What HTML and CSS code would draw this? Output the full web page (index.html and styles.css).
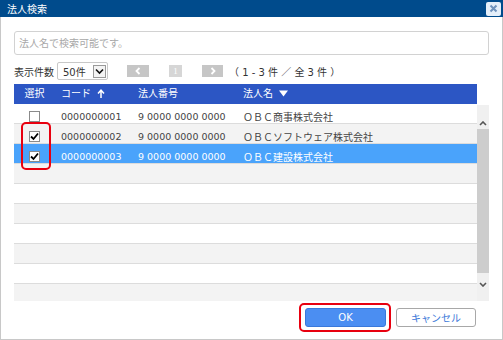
FILE: index.html
```html
<!DOCTYPE html>
<html>
<head>
<meta charset="utf-8">
<link rel="stylesheet" href="styles.css">
</head>
<body>
<div class="dlg">
	<div class="ttl"><span>法人検索</span><a class="cls"><svg width="9" height="9" viewBox="0 0 9 9"><path d="M1.5 1.5L7.5 7.5M7.5 1.5L1.5 7.5" stroke="#6f93bd" stroke-width="2"/></svg></a></div>
	<div class="cnt">
		<input class="srch" type="text" placeholder="法人名で検索可能です。">
		<div class="bar">
			<span>表示件数</span>
			<div class="sel"><span>50件</span><i class="dd"><svg width="9" height="7" viewBox="0 0 9 7"><path d="M1 1.5L4.5 5L8 1.5" fill="none" stroke="#111" stroke-width="1.6"/></svg></i></div>
			<a class="pg"><svg width="6" height="8" viewBox="0 0 6 8"><path d="M4.5 1L1.5 4L4.5 7" fill="none" stroke="#fff" stroke-width="1.8"/></svg></a>
			<a class="pg num">1</a>
			<a class="pg"><svg width="6" height="8" viewBox="0 0 6 8"><path d="M1.5 1L4.5 4L1.5 7" fill="none" stroke="#fff" stroke-width="1.8"/></svg></a>
			<span class="total">（ 1 - 3 件 ／ 全 3 件 ）</span>
		</div>
		<div class="hd">
			<div class="c1">選択</div>
			<div class="c2">コード <svg class="ar" width="8" height="9" viewBox="0 0 8 9"><path d="M4 9V1.5M1 4.5L4 1.2L7 4.5" fill="none" stroke="#fff" stroke-width="1.5"/></svg></div>
			<div class="c3">法人番号</div>
			<div class="c4">法人名 <svg class="tri" width="9" height="7" viewBox="0 0 9 7"><path d="M0 0.5H9L4.5 6.5Z" fill="#fff"/></svg></div>
		</div>
		<div class="bd">
			<div class="rows">
				<div class="row"><div class="c1"><i class="cb"></i></div><div class="c2 n">0000000001</div><div class="c3 n">9 0000 0000 0000</div><div class="c4">ＯＢＣ商事株式会社</div></div>
				<div class="row"><div class="c1"><i class="cb on"><svg width="9" height="9" viewBox="0 0 9 9"><path d="M1 4.5L3.5 7L8 1.5" fill="none" stroke="#000" stroke-width="1.8"/></svg></i></div><div class="c2 n">0000000002</div><div class="c3 n">9 0000 0000 0000</div><div class="c4">ＯＢＣソフトウェア株式会社</div></div>
				<div class="row sel-row"><div class="c1"><i class="cb on"><svg width="9" height="9" viewBox="0 0 9 9"><path d="M1 4.5L3.5 7L8 1.5" fill="none" stroke="#000" stroke-width="1.8"/></svg></i></div><div class="c2 n">0000000003</div><div class="c3 n">9 0000 0000 0000</div><div class="c4">ＯＢＣ建設株式会社</div></div>
				<div class="row"></div>
				<div class="row"></div>
				<div class="row"></div>
				<div class="row"></div>
				<div class="row"></div>
				<div class="row"></div>
				<div class="row"></div>
			</div>
			<div class="sb">
				<div class="sb-up"><svg width="8" height="5" viewBox="0 0 8 5"><path d="M1 4L4 1L7 4" fill="none" stroke="#555" stroke-width="1.6"/></svg></div>
				<div class="sb-thumb"></div>
				<div class="sb-dn"><svg width="8" height="5" viewBox="0 0 8 5"><path d="M1 1L4 4L7 1" fill="none" stroke="#555" stroke-width="1.6"/></svg></div>
			</div>
		</div>
		<div class="ftr">
			<button class="btn ok">OK</button>
			<button class="btn cancel">キャンセル</button>
		</div>
	</div>
	<div class="mark m1"></div>
	<div class="mark m2"></div>
</div>
</body>
</html>
```

FILE: styles.css
```css
html,body{margin:0;height:100%}
body{background:#fff;font-family:"DejaVu Sans","Noto Sans CJK JP",sans-serif;font-size:10px;color:#333}
a{cursor:pointer}
.dlg{position:relative;width:503px;height:340px;box-sizing:border-box;border:1px solid #c8c8c8;border-top:none}
.ttl{
	height:17px;margin:0 -1px;
	background:#004b8c;color:#fff;
	display:flex;justify-content:space-between;align-items:center;
	padding-left:7px;
}
.ttl .cls{
	width:15px;height:14px;margin-right:2px;
	background:#e4effa;border-radius:2px;
	display:flex;align-items:center;justify-content:center;
}
.cnt{padding:14px 13px 0 13px}
.srch{
	display:block;width:100%;height:24px;box-sizing:border-box;
	border:1px solid #d2d2d2;border-radius:3px;
	padding:0 4px;outline:none;
	font-family:inherit;font-size:10px;color:#333;
}
.srch::placeholder{color:#a8a8a8}
.bar{display:flex;align-items:center;height:18px;margin-top:7px}
.sel{
	display:flex;align-items:center;justify-content:space-between;
	width:51px;height:18px;box-sizing:border-box;margin-left:3px;
	border:1px solid #c8c8c8;border-radius:2px;padding:0 1px 0 5px;
}
.sel .dd{
	width:13px;height:13px;box-sizing:border-box;border:1px solid #9a9a9a;
	display:flex;align-items:center;justify-content:center;background:#f4f4f4;
}
.pg{
	width:21px;height:12px;background:#c6c6c6;
	display:flex;align-items:center;justify-content:center;
	margin-left:20px;
}
.pg:first-of-type{width:22px;margin-left:19px}
.pg.num{width:13px;background:#d6d6d6;color:#fff;font-size:9px;font-family:"Liberation Serif",serif}
.total{margin-left:6px}
.hd{
	display:flex;height:20px;box-sizing:border-box;padding-bottom:3px;
	margin-top:4px;margin-right:12px;
	background:#2c56c4;color:#fff;align-items:center;
}
.c1{width:41px;text-align:center;flex:none;display:flex;justify-content:center}
.c2{width:77px;flex:none;padding-left:6px;box-sizing:border-box}
.c3{width:105px;flex:none;padding-left:6px;box-sizing:border-box}
.c4{flex:1;padding-left:6px}
.n{font-size:9.5px}
.hd .ar{margin-left:3px;vertical-align:-1px}
.hd .tri{margin-left:3px}
.bd{display:flex;height:197px;overflow:hidden}
.rows{flex:1}
.row{
	display:flex;align-items:center;height:20px;box-sizing:border-box;padding-top:5px;
	border-bottom:1px solid #dcdcdc;background:#fff;color:#444;
}
.row:nth-child(even){background:#f3f3f3}
.row.sel-row{background:#4aa3fb;color:#fff}
.cb{
	width:11px;height:11px;box-sizing:border-box;
	border:1px solid #8a8a8a;background:#fff;
	display:flex;align-items:center;justify-content:center;
}
.sb{width:12px;flex:none;background:#f0f0f0;display:flex;flex-direction:column;margin-top:1px}
.sb-up{height:24px;display:flex;align-items:flex-end;justify-content:center;padding-bottom:3px;box-sizing:border-box}
.sb-thumb{height:144px;background:#cdcdcd}
.sb-dn{height:20px;display:flex;justify-content:center;padding-top:9px;box-sizing:border-box}
.ftr{display:flex;justify-content:flex-end;gap:10px;margin-top:7px;padding-right:13px}
.btn{
	height:19px;box-sizing:border-box;border-radius:3px;
	font-family:inherit;font-size:10px;padding:0;
}
.ok{width:81px;background:#4b8ef2;border:1px solid #3a78da;color:#fff}
.cancel{width:80px;background:#fff;border:1px solid #a8a8a8;color:#3b78d8}
.mark{position:absolute;border:2.5px solid #e8000f;border-radius:5px;box-sizing:border-box}
.m1{left:20px;top:122px;width:30px;height:48px}
.m2{left:298px;top:303px;width:92px;height:29px}
```
